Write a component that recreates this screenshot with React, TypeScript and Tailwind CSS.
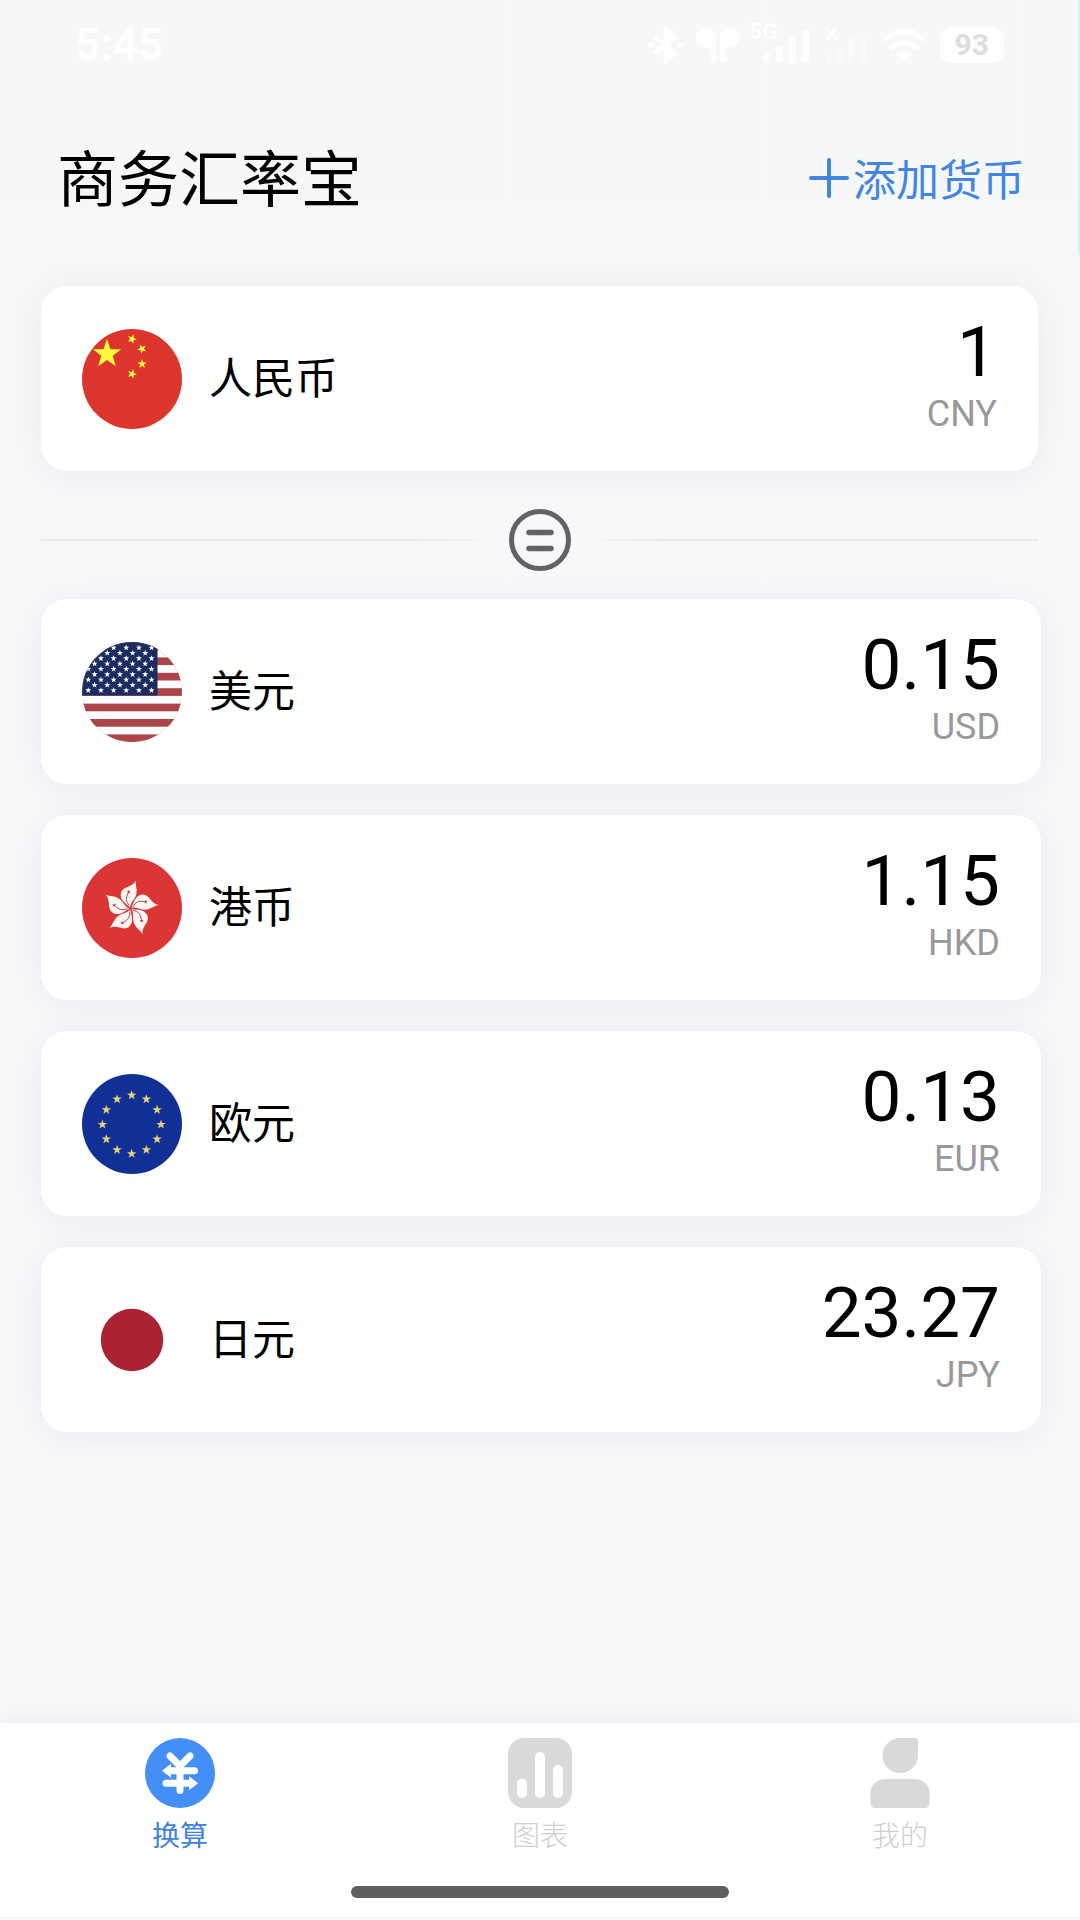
import { useState } from 'react';
import type { ReactNode } from 'react';

interface Currency {
  code: string;
  name: string;
  value: string;
  flag: ReactNode;
}

// Points of a five-pointed star around (cx, cy)
function starPoints(cx: number, cy: number, r: number, turn = 0) {
  const pts: string[] = [];
  for (let i = 0; i < 10; i++) {
    const rad = i % 2 === 0 ? r : r * 0.4;
    const a = ((i * 36 + turn - 90) * Math.PI) / 180;
    pts.push(`${(cx + rad * Math.cos(a)).toFixed(2)},${(cy + rad * Math.sin(a)).toFixed(2)}`);
  }
  return pts.join(' ');
}

function Flag({ id, label, children }: { id: string; label: string; children: ReactNode }) {
  return (
    <svg viewBox="0 0 100 100" className="size-[100px] shrink-0" role="img" aria-label={label}>
      <clipPath id={id}>
        <circle cx="50" cy="50" r="50" />
      </clipPath>
      <g clipPath={`url(#${id})`}>{children}</g>
    </svg>
  );
}

const ChinaFlag = (
  <Flag id="flag-cn" label="CNY">
    <rect width="100" height="100" fill="#dc352e" />
    <g fill="#fffb3c">
      <polygon points={starPoints(25, 25, 15)} />
      <polygon points={starPoints(50, 10, 5, 20)} />
      <polygon points={starPoints(60, 20, 5, 45)} />
      <polygon points={starPoints(60, 35, 5)} />
      <polygon points={starPoints(50, 45, 5, 20)} />
    </g>
  </Flag>
);

const usStars: [number, number][] = [];
for (let row = 0; row < 9; row++) {
  const odd = row % 2 === 1;
  for (let col = 0; col < (odd ? 5 : 6); col++) {
    usStars.push([6.3 + col * 12.65 + (odd ? 6.3 : 0), 5.7 + row * 5.33]);
  }
}

const UsFlag = (
  <Flag id="flag-us" label="USD">
    <rect width="100" height="100" fill="#fff" />
    {[0, 2, 4, 6, 8, 10, 12].map((i) => (
      <rect key={i} y={i * 7.7} width="100" height="7.7" fill="#ac444a" />
    ))}
    <rect width="75.5" height="53.5" fill="#1d2c60" />
    {usStars.map(([x, y]) => (
      <polygon key={`${x}-${y}`} points={starPoints(x, y, 3.2)} fill="#fff" />
    ))}
    <circle cx="50" cy="50" r="49.7" fill="none" stroke="#8a6f80" strokeOpacity="0.4" strokeWidth="0.6" />
  </Flag>
);

const HongKongFlag = (
  <Flag id="flag-hk" label="HKD">
    <rect width="100" height="100" fill="#dc3536" />
    {[0, 72, 144, 216, 288].map((deg) => (
      <g key={deg} transform={`translate(48.5 50.5) rotate(${deg})`}>
        <path
          d="M-0.5 -1C-4 -5 -11.500 -8 -9.500 -16C-7.500 -22.500 2 -21 5.500 -28C4.500 -23 7.500 -19.500 5.500 -13C3.500 -8 0 -6 -0.500 -1Z"
          fill="#fdf6f2"
        />
        <path d="M-1 -3C-5 -7 -4.500 -11 -2.500 -15" fill="none" stroke="#7d3a36" strokeWidth="0.8" />
        <polygon points={starPoints(-1.8, -16.5, 2.2)} fill="#c8383b" />
      </g>
    ))}
  </Flag>
);

const EuFlag = (
  <Flag id="flag-eu" label="EUR">
    <rect width="100" height="100" fill="#113096" />
    {Array.from({ length: 12 }, (_, i) => {
      const a = (i * Math.PI) / 6;
      return (
        <polygon
          key={i}
          points={starPoints(49.7 + 29.3 * Math.sin(a), 50.5 - 29.3 * Math.cos(a), 5)}
          fill="#e6cf74"
        />
      );
    })}
  </Flag>
);

const JapanFlag = (
  <Flag id="flag-jp" label="JPY">
    <rect width="100" height="100" fill="#fff" />
    <circle cx="50" cy="50" r="31.2" fill="#ab2232" />
  </Flag>
);

const base: Currency = { code: 'CNY', name: '人民币', value: '1', flag: ChinaFlag };

const targets: Currency[] = [
  { code: 'USD', name: '美元', value: '0.15', flag: UsFlag },
  { code: 'HKD', name: '港币', value: '1.15', flag: HongKongFlag },
  { code: 'EUR', name: '欧元', value: '0.13', flag: EuFlag },
  { code: 'JPY', name: '日元', value: '23.27', flag: JapanFlag },
];

function CurrencyCard({ currency }: { currency: Currency }) {
  return (
    <div className="flex h-[185px] items-center rounded-[26px] bg-white px-[41px] shadow-[0_4px_36px_rgba(30,40,60,0.06)]">
      {currency.flag}
      <span className="ml-[27px] pb-2 text-[43px] leading-[60px]">{currency.name}</span>
      <div className="ml-auto flex flex-col items-end pb-1.5 font-['Roboto',sans-serif]">
        <span className="text-[71px] leading-[76px]">{currency.value}</span>
        <span className="text-[36px] leading-[48px] text-[#999999]">{currency.code}</span>
      </div>
    </div>
  );
}

function StatusBar() {
  return (
    <div className="flex h-[90px] items-center justify-between pr-[76px] pl-[75px] font-['Roboto',sans-serif] text-[#fefefe]">
      <span className="text-[44px] leading-[48px] font-bold">5:45</span>
      <div className="flex items-center gap-2">
        <svg width="38" height="38" viewBox="0 0 38 38" fill="none" stroke="currentColor" strokeWidth="5">
          <path d="M7 11l20 16-9 8V3l9 8L7 27" strokeLinejoin="round" strokeLinecap="round" />
          <path d="M2 19h1M32 19h1" strokeLinecap="round" />
        </svg>
        <svg width="48" height="38" viewBox="0 0 48 38" fill="currentColor">
          <path d="M2 12a10 10 0 0 1 20-2v24a3 3 0 0 1-6 0V21C9 23 2 19 2 12zM46 12a10 10 0 0 0-20-2v24a3 3 0 0 0 6 0V21c7 2 14-2 14-9z" />
        </svg>
        <div className="relative h-[38px] w-[66px]">
          <span className="absolute -top-1 left-0 text-[22px] leading-5 font-bold">5G</span>
          <svg width="62" height="38" viewBox="0 0 62 38" fill="currentColor">
            <rect x="13" y="27" width="7" height="10" rx="2" />
            <rect x="26" y="20" width="7" height="17" rx="2" />
            <rect x="39" y="11" width="7" height="26" rx="2" />
            <rect x="52" y="3" width="7" height="34" rx="2" />
          </svg>
        </div>
        <svg width="50" height="38" viewBox="0 0 50 38" fill="currentColor">
          <path d="M2 2l11 11M13 2L2 13" stroke="currentColor" strokeWidth="3" />
          <g fillOpacity="0.3">
            <rect x="2" y="29" width="6" height="8" rx="2" />
            <rect x="13" y="22" width="6" height="15" rx="2" />
            <rect x="24" y="11" width="6" height="26" rx="2" />
            <rect x="36" y="11" width="6" height="26" rx="2" />
          </g>
        </svg>
        <svg width="50" height="38" viewBox="0 0 50 38" fill="none" stroke="currentColor" strokeWidth="5">
          <path d="M3 13a28 28 0 0 1 38 0M9 22a19 19 0 0 1 26 0" strokeLinecap="round" />
          <path d="M14 28a12 12 0 0 1 16 0l-8 8z" fill="currentColor" stroke="none" />
        </svg>
        <span className="rounded-[12px] bg-[#fefefe] px-[15px] text-[30px] leading-9 font-bold text-[#dcdddd]">93</span>
      </div>
    </div>
  );
}

function YenIcon() {
  return (
    <svg width="70" height="70" viewBox="0 0 70 70" fill="none" stroke="#fff" strokeWidth="7" strokeLinecap="round">
      <circle cx="35" cy="35" r="35" fill="#448ef7" stroke="none" />
      <path d="M25 18l10 10 10-10M35 27v25.500M23 32.800h26.500M21 45.200h26" />
      <path d="M17 32.800l9-7v14zM53 45.200l-9-7v14z" fill="#fff" stroke="none" />
    </svg>
  );
}

function ChartIcon() {
  return (
    <svg width="64" height="70" viewBox="0 0 64 70">
      <rect width="64" height="70" rx="16" fill="#dadadc" />
      <g fill="#fff">
        <rect x="9" y="40.500" width="10" height="19.500" rx="5" />
        <rect x="27" y="14" width="10" height="46" rx="5" />
        <rect x="45" y="27" width="10" height="33" rx="5" />
      </g>
    </svg>
  );
}

function PersonIcon() {
  return (
    <svg width="60" height="70" viewBox="0 0 60 70" fill="#d9d9da">
      <path d="M30 0h15a3 3 0 0 1 3 3v14.500A17.800 17.500 0 1 1 30 0z" />
      <path d="M16 41h28c9 0 15.500 6 15.500 14v10c0 3-2 5-5 5h-49c-3 0-5-2-5-5V55c0-8 6.500-14 15.500-14z" />
    </svg>
  );
}

const tabs = [
  { key: 'convert', label: '换算', icon: <YenIcon /> },
  { key: 'chart', label: '图表', icon: <ChartIcon /> },
  { key: 'mine', label: '我的', icon: <PersonIcon /> },
];

export default function App() {
  const [tab, setTab] = useState('convert');

  return (
    <div className="relative flex min-h-screen flex-col bg-linear-to-b from-[#f6f8f7] from-10% to-[#f7f8fa] to-30% font-['Noto_Sans_CJK_SC',sans-serif] text-black">
      <div className="absolute top-0 right-0 h-[255px] w-0.5 bg-[#d3eff8]" />
      <StatusBar />

      <header className="flex h-[176px] items-center justify-between pr-[55px] pl-[57px]">
        <h1 className="pb-1 text-[61px] leading-[80px]">商务汇率宝</h1>
        <button type="button" className="flex items-center gap-1 text-[43px] leading-[60px] text-[#4285e5]">
          <svg width="40" height="40" viewBox="0 0 40 40" stroke="currentColor" strokeWidth="4" strokeLinecap="round">
            <path d="M20 2v36M2 20h36" />
          </svg>
          <span className="pb-0.5">添加货币</span>
        </button>
      </header>

      <main className="flex-1 pt-5 pr-[39px] pb-8 pl-[41px]">
        <div className="pr-[3px]">
          <CurrencyCard currency={base} />

          {/* Divider */}
          <div className="flex h-[128px] items-center pt-[10px]">
            <div className="h-0.5 flex-1 bg-linear-to-r from-[#e9eaec] from-85% to-[#e9eaec]/20" />
            <svg width="62" height="62" viewBox="0 0 62 62" className="mx-[27px]" fill="none" stroke="#616265">
              <circle cx="31" cy="31" r="28.500" strokeWidth="5" />
              <path d="M20 23.500h22M20 39.500h22" strokeWidth="5.500" strokeLinecap="round" />
            </svg>
            <div className="h-0.5 flex-1 bg-linear-to-l from-[#e9eaec] from-85% to-[#e9eaec]/20" />
          </div>
        </div>

        <ul className="flex flex-col gap-[31px]">
          {targets.map((c) => (
            <li key={c.code}>
              <CurrencyCard currency={c} />
            </li>
          ))}
        </ul>
      </main>

      <nav className="border-b-4 border-[#f7f8f8] bg-white pt-[15px] shadow-[0_0_24px_rgba(30,40,60,0.06)]">
        <div className="grid grid-cols-3">
          {tabs.map((t) => (
            <button
              key={t.key}
              type="button"
              onClick={() => setTab(t.key)}
              className={`flex flex-col items-center gap-2 text-[28px] leading-9 ${
                tab === t.key ? 'text-[#3f83dc]' : 'font-light text-[#cfcfd0]'
              }`}
            >
              {t.icon}
              {t.label}
            </button>
          ))}
        </div>
        <div className="mx-auto mt-[34px] mb-[18px] h-3 w-[35%] rounded-full bg-[#5f5f5f]" />
      </nav>
    </div>
  );
}
